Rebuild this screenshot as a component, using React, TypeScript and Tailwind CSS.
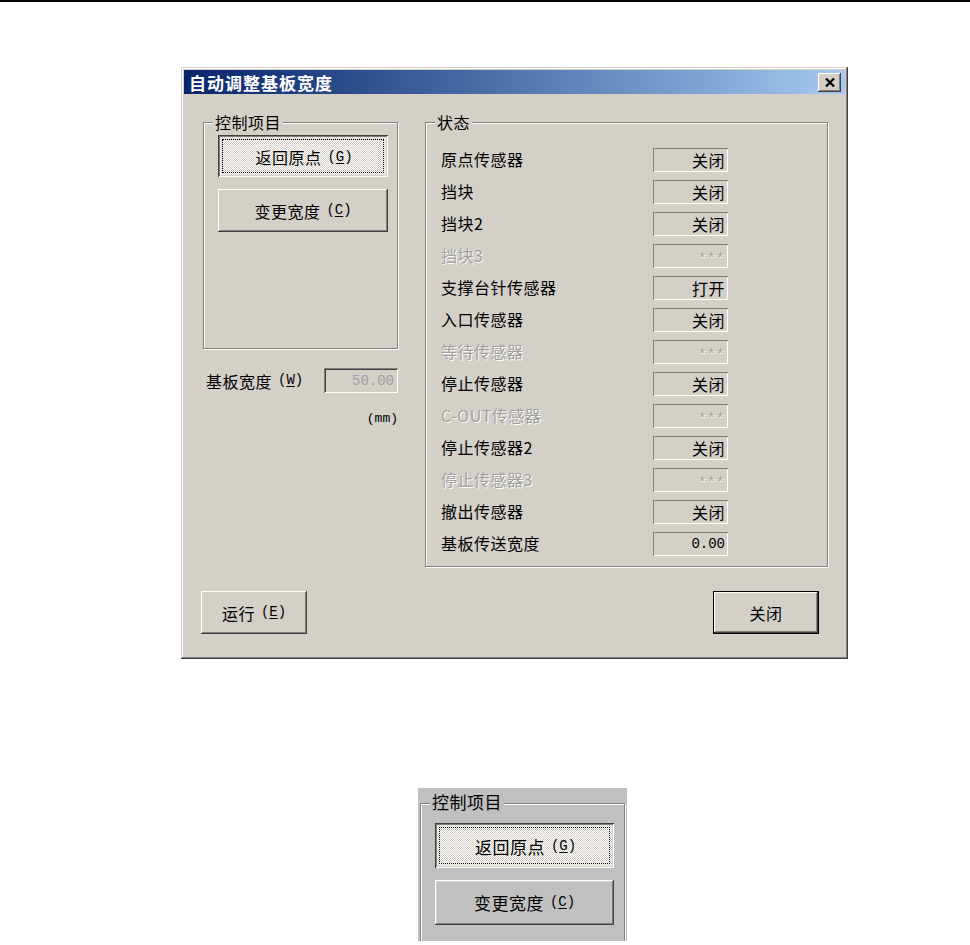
import React from "react";

const cjk = "font-['Noto_Sans_CJK_SC','Noto_Sans_CJK_JP',sans-serif]";
const mono = "font-['Liberation_Mono','Noto_Sans_CJK_SC',monospace]";

const raised =
  "shadow-[inset_-1px_-1px_#404040,inset_1px_1px_#ffffff,inset_-2px_-2px_#808080,inset_2px_2px_#d4d0c8]";
const pushed =
  "shadow-[inset_1px_1px_#404040,inset_-1px_-1px_#ffffff,inset_2px_2px_#808080,inset_-2px_-2px_#d4d0c8]";

function Mn({ c }: { c: string }) {
  return (
    <span className={`${mono} text-[14px]`}>
      (<span className="underline underline-offset-2">{c}</span>)
    </span>
  );
}

function PushedBtn({ children, className = "" }: { children: React.ReactNode; className?: string }) {
  return (
    <div
      className={`relative flex items-center justify-center ${pushed} bg-[image:repeating-conic-gradient(#ffffff_0%_25%,#d4d0c8_0%_50%)] bg-[length:2px_2px] ${className}`}
    >
      <div className="absolute inset-[4px] border border-dotted border-black" />
      <span className="relative top-[1px] left-[1px] flex items-center gap-[6px]">{children}</span>
    </div>
  );
}

function RaisedBtn({
  children,
  className = "",
  def = false,
}: {
  children: React.ReactNode;
  className?: string;
  def?: boolean;
}) {
  return (
    <div className={`${def ? "border border-black" : ""} ${className}`}>
      <div className={`w-full h-full flex items-center justify-center gap-[6px] ${raised}`}>{children}</div>
    </div>
  );
}

function GroupBox({
  label,
  className = "",
  labelClass = "",
  children,
}: {
  label: string;
  className?: string;
  labelClass?: string;
  children?: React.ReactNode;
}) {
  return (
    <div className={`relative border border-[#808080] shadow-[inset_1px_1px_#ffffff,1px_1px_#ffffff] ${className}`}>
      <div className={`absolute -top-[11px] left-[9px] px-[2px] leading-[20px] ${labelClass}`}>{label}</div>
      {children}
    </div>
  );
}

const rows: { label: string; value: string; disabled?: boolean; num?: boolean }[] = [
  { label: "原点传感器", value: "关闭" },
  { label: "挡块", value: "关闭" },
  { label: "挡块2", value: "关闭" },
  { label: "挡块3", value: "***", disabled: true },
  { label: "支撑台针传感器", value: "打开" },
  { label: "入口传感器", value: "关闭" },
  { label: "等待传感器", value: "***", disabled: true },
  { label: "停止传感器", value: "关闭" },
  { label: "C-OUT传感器", value: "***", disabled: true },
  { label: "停止传感器2", value: "关闭" },
  { label: "停止传感器3", value: "***", disabled: true },
  { label: "撤出传感器", value: "关闭" },
  { label: "基板传送宽度", value: "0.00", num: true },
];

export default function App() {
  return (
    <div className={`min-h-[945px] w-[970px] bg-white ${cjk} text-black`}>
      <div className="h-[2px] bg-black" />

      {/* Dialog */}
      <div className="ml-[181px] mt-[65px] w-[667px] h-[592px] bg-[#d4d0c8] p-[3px] flex flex-col shadow-[inset_-1px_-1px_#404040,inset_1px_1px_#d4d0c8,inset_-2px_-2px_#808080,inset_2px_2px_#ffffff]">
        {/* Title bar */}
        <div className="h-[24px] flex items-center justify-between pl-[5px] pr-[4px] bg-gradient-to-r from-[#0a246a] to-[#a6caf0]">
          <span className="text-white font-bold text-[17px] tracking-[1px] leading-none">自动调整基板宽度</span>
          <div className={`w-[23px] h-[19px] bg-[#d4d0c8] flex items-center justify-center ${raised}`}>
            <svg width="10" height="9" viewBox="0 0 10 9">
              <path d="M1 0.5 L9 8.5 M9 0.5 L1 8.5" stroke="#000" strokeWidth="2.2" />
            </svg>
          </div>
        </div>

        {/* Content */}
        <div className="flex items-start mt-[28px]">
          {/* Left column */}
          <div className="ml-[19px] w-[195px] flex flex-col">
            <GroupBox label="控制项目" className="h-[227px]" labelClass="bg-[#d4d0c8] text-[16px] tracking-[0.5px]">
              <div className="flex flex-col pt-[12px] pl-[14px] gap-[12px]">
                <PushedBtn className="w-[170px] h-[42px]">
                  <span className="text-[16px] tracking-[0.5px] leading-none">返回原点</span>
                  <Mn c="G" />
                </PushedBtn>
                <RaisedBtn className="w-[170px] h-[43px]">
                  <span className="text-[16px] tracking-[0.5px] leading-none">变更宽度</span>
                  <Mn c="C" />
                </RaisedBtn>
              </div>
            </GroupBox>

            <div className="mt-[19px] flex items-center justify-between pl-[3px]">
              <span className="flex items-center gap-[6px]">
                <span className="text-[16px] tracking-[0.5px] leading-none">基板宽度</span>
                <Mn c="W" />
              </span>
              <div className="w-[74px] h-[25px] flex items-center justify-end pr-[4px] shadow-[inset_1px_1px_#808080,inset_-1px_-1px_#ffffff,inset_2px_2px_#404040,inset_-2px_-2px_#d4d0c8]">
                <span className={`${mono} text-[14px] text-[#a0a0a0] leading-none`}>50.00</span>
              </div>
            </div>
            <div className={`mt-[19px] text-right ${mono} text-[13px] leading-none`}>(mm)</div>
          </div>

          {/* Right column */}
          <div className="ml-[27px] w-[403px]">
            <GroupBox label="状态" className="h-[445px]" labelClass="bg-[#d4d0c8] text-[16px] tracking-[0.5px]">
              <div className="pt-[25px] pl-[15px] grid grid-cols-[212px_75px] gap-y-[8px]">
                {rows.map((r) => (
                  <React.Fragment key={r.label}>
                    <div
                      className={`h-[24px] flex items-center pb-[3px] text-[16px] tracking-[0.5px] leading-none ${
                        r.disabled ? "text-[#a0a0a0] [text-shadow:1px_1px_0_#ffffff]" : "text-black"
                      }`}
                    >
                      {r.label}
                    </div>
                    <div className="h-[24px] flex items-center justify-end pr-[3px] shadow-[inset_1px_1px_#808080,inset_-1px_-1px_#ffffff]">
                      {r.disabled ? (
                        <span className={`${mono} relative top-[3px] text-[15px] text-[#a0a0a0] leading-none [text-shadow:1px_1px_0_#ffffff]`}>
                          ***
                        </span>
                      ) : r.num ? (
                        <span className={`${mono} text-[14px] leading-none`}>{r.value}</span>
                      ) : (
                        <span className="text-[16px] tracking-[0.5px] leading-none">{r.value}</span>
                      )}
                    </div>
                  </React.Fragment>
                ))}
              </div>
            </GroupBox>
          </div>
        </div>

        {/* Bottom buttons */}
        <div className="mt-[24px] flex justify-between pl-[17px] pr-[26px]">
          <RaisedBtn className="w-[106px] h-[43px]">
            <span className="text-[16px] tracking-[0.5px] leading-none">运行</span>
            <Mn c="E" />
          </RaisedBtn>
          <RaisedBtn def className="w-[106px] h-[43px]">
            <span className="text-[16px] tracking-[0.5px] leading-none">关闭</span>
          </RaisedBtn>
        </div>
      </div>

      {/* Crop */}
      <div className="ml-[418px] mt-[129px] w-[209px] h-[153px] bg-[#c0c0c0] overflow-hidden pt-[15px] pl-[2px]">
        <GroupBox label="控制项目" className="w-[205px] h-[200px]" labelClass="bg-[#c0c0c0] text-[17px] tracking-[0.5px] -top-[12px] left-[8px]">
          <div className="flex flex-col pt-[19px] pl-[14px] gap-[12px]">
            <PushedBtn className="w-[179px] h-[45px]">
              <span className="text-[17px] tracking-[0.5px] leading-none">返回原点</span>
              <Mn c="G" />
            </PushedBtn>
            <RaisedBtn className="w-[179px] h-[45px]">
              <span className="text-[17px] tracking-[0.5px] leading-none">变更宽度</span>
              <Mn c="C" />
            </RaisedBtn>
          </div>
        </GroupBox>
      </div>
    </div>
  );
}
